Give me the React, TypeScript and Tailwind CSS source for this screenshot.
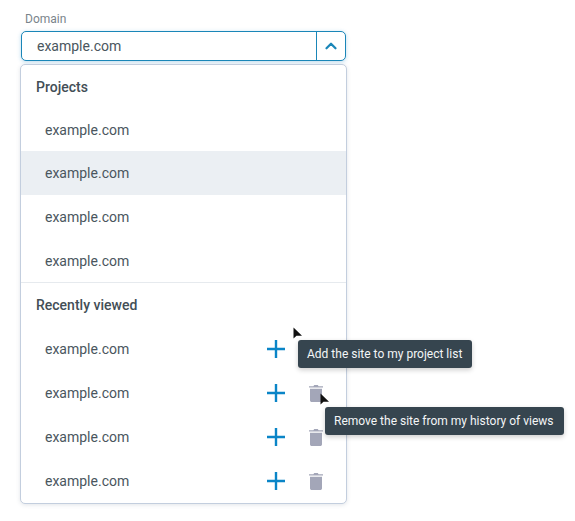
import { ChevronUp } from 'lucide-react';

const projects = ['example.com', 'example.com', 'example.com', 'example.com'];
const recent = [false, true, true, true];

function PlusIcon() {
  return (
    <svg width="18" height="18" viewBox="0 0 18 18" className="text-[#0a85c7]">
      <path d="M9 0v18M0 9h18" stroke="currentColor" strokeWidth="2.4" fill="none" />
    </svg>
  );
}

function TrashIcon() {
  return (
    <svg width="14" height="18" viewBox="0 0 14 18" className="text-[#a3a6b8]">
      <path d="M0 2.2h4.4L5.2 1h3.6l.8 1.2H14v1.4H0z" fill="currentColor" />
      <path d="M1 4.8h12v11.4c0 1-.8 1.8-1.8 1.8H2.8c-1 0-1.8-.8-1.8-1.8z" fill="currentColor" />
    </svg>
  );
}

function Cursor({ className }: { className: string }) {
  return (
    <svg width="10" height="13" viewBox="0 0 10 13" className={`absolute ${className}`}>
      <path d="M0.5 0.5v11l3-2.8h5.5z" fill="#111" />
    </svg>
  );
}

function Tooltip({ text, className }: { text: string; className: string }) {
  return (
    <div className={`absolute z-10 h-7 pl-[9px] flex items-center rounded-[3px] bg-[#36454f] text-[#f4f6f7] text-[12px] whitespace-nowrap shadow-[0_2px_5px_rgba(0,0,0,0.2)] ${className}`}>
      {text}
    </div>
  );
}

export default function App() {
  return (
    <div className="relative w-[575px] h-[521px] bg-white overflow-hidden font-['Roboto',sans-serif] pl-[20px] pt-[12px]">
      <div className="text-[12px] leading-[14px] text-[#7a848b] pl-[5px]">Domain</div>

      {/* Select */}
      <div className="mt-[5px] ml-px w-[325px] h-[30px] flex rounded-[5px] border border-[#1a86b8] bg-white shadow-[0_1px_4px_rgba(26,134,200,0.3)]">
        <div className="flex-1 pl-[15px] flex items-center text-[14px] text-[#4a565e]">example.com</div>
        <div className="w-[29px] border-l border-[#1a86b8] flex items-center justify-center text-[#1a86b8]">
          <ChevronUp size={18} strokeWidth={3} />
        </div>
      </div>

      {/* Dropdown */}
      <div className="mt-[3px] w-[327px] h-[440px] rounded-[5px] border border-[#c3cede] bg-white shadow-[0_1px_4px_rgba(60,80,110,0.15)] text-[14px] text-[#4a565e]">
        <div className="h-[43px] pl-[15px] pt-px flex items-center font-medium text-[#434e56]">Projects</div>
        {projects.map((p, i) => (
          <div
            key={i}
            className={`pl-[24px] flex items-center ${i === 0 ? 'h-[43px] pt-[2px]' : 'h-[44px]'} ${i === 1 ? 'bg-[#ebeff3]' : ''}`}
          >
            {p}
          </div>
        ))}
        <div className="-mt-px border-t border-[#e6eaee] h-[45px] pl-[15px] flex items-center font-medium text-[#434e56]">Recently viewed</div>
        {recent.map((hasTrash, i) => (
          <div key={i} className="h-[44px] pl-[24px] flex items-center">
            <span className="flex-1">example.com</span>
            <div className="w-[18px] mr-[24px]">
              <PlusIcon />
            </div>
            <div className="w-[14px] mr-[23px]">{hasTrash && <TrashIcon />}</div>
          </div>
        ))}
      </div>

      <Tooltip text="Add the site to my project list" className="left-[298px] top-[340px] w-[174px]" />
      <Tooltip text="Remove the site from my history of views" className="left-[325px] top-[407px] w-[239px]" />
      <Cursor className="left-[293px] top-[327px]" />
      <Cursor className="left-[320px] top-[393px]" />
    </div>
  );
}
